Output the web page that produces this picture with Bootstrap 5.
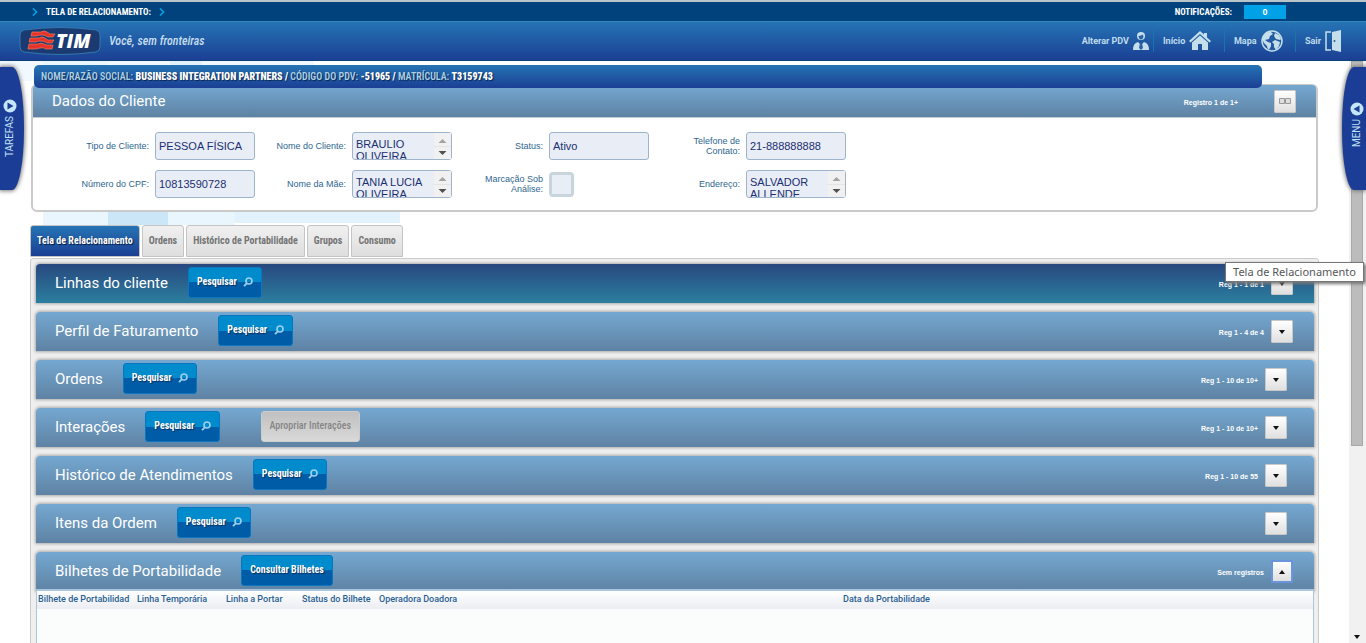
<!DOCTYPE html>
<html lang="pt-BR">
<head>
<meta charset="utf-8">
<meta name="viewport" content="width=device-width, initial-scale=1">
<title>Tela de Relacionamento</title>
<link rel="stylesheet" href="https://cdn.jsdelivr.net/npm/bootstrap@5.3.0/dist/css/bootstrap.min.css">
<style>
  :root { --narrow: "Roboto Condensed", "Liberation Sans Narrow", Roboto, sans-serif; }
  body { font-family: "Liberation Sans", Arial, sans-serif; font-size: 11px; line-height: 14px; color: #1c3d73; background: #fff; }
  a { text-decoration: none; }
  .crumb-bar { height: 22px; background: #02427c; border-top: 2px solid #b9c3ca; border-bottom: 1px solid #3784bd; color: #fff; font-weight: 700; font-size: 9px; font-family: var(--narrow); padding: 0 80px 0 32px; }
  .notif { width: 42px; height: 14px; background: #00a1e6; color: #fff; font: 700 9px/14px "Liberation Sans", Arial, sans-serif; }
  .brand-bar { height: 39px; background: linear-gradient(#2574b4, #1b3f94); border-bottom: 1px solid #0a4279; padding: 0 24px 1px 19px; }
  .slogan { font: italic 500 11px/14px var(--narrow); font-size: 12px; color: #c5def0; }
  .top-link { color: #bfdcec; font: 700 9px/14px Roboto, sans-serif; height: 22px; gap: 4px; padding-left: 9px; }
  .top-link.tile { width: 71px; }
  .top-link + .top-link { border-left: 1px solid #1478ac; }
  .workspace { background:
    linear-gradient(#eaf6fd, #eaf6fd) 43px 0 / 65px 164px no-repeat,
    linear-gradient(#cbe6f7, #cbe6f7) 108px 20px / 60px 144px no-repeat,
    linear-gradient(#eaf6fd, #eaf6fd) 168px 20px / 67px 144px no-repeat,
    linear-gradient(#e1f2fc, #e1f2fc) 235px 20px / 165px 142px no-repeat,
    linear-gradient(#e1f2fc, #e1f2fc) 170px 0 / 32px 20px no-repeat,
    linear-gradient(#f2f9fe, #f2f9fe) 0 0 / 314px 20px no-repeat; }
  .sheet { padding: 4px 30px 0 30px; min-width: 0; }
  .who-bar { height: 23px; margin: 0 57px -4px 4px; padding: 0 7px; border-radius: 5px; background: linear-gradient(#2574b4, #1b3f94); color: #a9d0e4; font: 600 10px/23px var(--narrow); text-shadow: 1px 1px 1px #0a2550; z-index: 2; }
  .who-bar b { color: #fff; }
  .client-box { margin: 0 1px; border: 2px solid #cacaca; border-top-width: 1px; border-radius: 6px; background: #fff; height: 128px; }
  .client-head { height: 33px; background: linear-gradient(#75a8d1, #5e82a3); border-bottom: 1px solid #c4ccd2; border-radius: 4px 4px 0 0; padding: 0 20px 0 19px; }
  .sec-title { font: 400 15px/20px Roboto, sans-serif; color: #fff; margin: 0; }
  .reg { font-size: 7px; font-weight: 700; color: #fff; line-height: 10px; padding-top: 3px; }
  .form-zone { display: grid; grid-template-columns: repeat(4, 197px); row-gap: 10px; padding: 14px 0 0 25px; }
  .form-zone label { width: 68px; text-align: right; font-size: 9px; line-height: 10px; color: #2f6690; }
  .cell { display: flex; align-items: center; justify-content: flex-end; gap: 6px; width: 197px; height: 28px; }
  .cell-box { position: relative; width: 100px; height: 28px; }
  .form-zone .form-control { width: 100px; height: 28px; min-height: 28px; padding: 0 3px; font-size: 11px; line-height: 13px; color: #1a2f72; background: #e9edf6; border: 1px solid #9db4cb; border-radius: 3px; }
  .form-zone textarea.form-control { padding: 5px 20px 0 3px; line-height: 12px; resize: none; overflow: hidden; }
  .spin { position: absolute; right: 1px; top: 1px; width: 17px; height: 26px; background: #f1f1f1; }
  .form-zone .form-check-input { width: 25px; height: 25px; margin: 0; border: 3px solid #c8d5dc; border-radius: 4px; background: #e9edf6; }
  .nav-tabs.main-tabs { border: 0; margin-top: 13px; gap: 2px; }
  .main-tabs .nav-link { height: 32px; margin: 0; padding: 0 6px; border: 1px solid #c4c4c4; border-radius: 3px 3px 0 0; background: linear-gradient(#f0f0f0, #dedede); color: #747474; font: 700 10px/30px var(--narrow); white-space: nowrap; }
  .main-tabs .nav-link.active { background: linear-gradient(#2574b4, #1b3f94); color: #fff; text-shadow: 1px 1px 1px #06183f; border-color: #c4c4c4; }
  .panels { margin-top: 1px; border: 1px solid #cbcbcb; border-radius: 3px 3px 0 0; background: #efefef; padding: 5px 4px 0 5px; gap: 9px; }
  .strip { height: 39px; flex-shrink: 0; border-radius: 4px 4px 0 0; background: linear-gradient(#75a8d1, #5e82a3); box-shadow: 0 0 3px 1px #aaa; padding: 0 27px 2px 19px; gap: 20px; }
  .strip.wide { padding-right: 21px; }
  .strip.current { background: linear-gradient(#28487f, #2b7f9f); }
  .strip .sec-title { padding-top: 1px; }
  .strip .tally { gap: 7px; padding-top: 2px; }
  .act { height: 31px; padding: 0 8px 2px; border: 1px solid #0a76c0; border-radius: 3px; color: #fff; background: linear-gradient(#008ccc 50%, #005ca6 50%); font: 700 10px/14px var(--narrow); text-shadow: 1px 1px 1px #05315e; white-space: nowrap; }
  .act.idle { background: linear-gradient(#c0c0c0, #d9d9d9); border-color: #ccc; color: #858585; text-shadow: none; margin-left: 21px; font-weight: 500; }
  .sq { width: 22px; height: 23px; padding: 0; border: 1px solid #c9c9c9; border-radius: 1px; background: linear-gradient(#fff, #dfdfdf); line-height: 0; }
  .sq.focused { border: 2px solid #6a94dc; }
  .grid-wrap { border: 1px solid #a9c6dd; border-top-width: 2px; background: #fbfdfd; margin-top: -11px; z-index: 1; }
  .grid-wrap table { table-layout: fixed; width: 100%; background: linear-gradient(#fff, #ebedf2); }
  .grid-wrap th { font: 500 9px/17px Roboto, sans-serif; color: #2a5f92; padding: 0 0 1px 1px; white-space: nowrap; }
  .side-tab { position: absolute; top: 6px; width: 24px; height: 123px; border: 0; padding: 0 4px 0 0; background: #1c3d96; color: #bfe0f5; box-shadow: 0 0 4px 1px #777; font: 400 10px/14px Roboto, sans-serif; z-index: 5; gap: 3px; }
  .side-tab span { writing-mode: vertical-rl; transform: rotate(180deg); }
  .side-left { left: 0; border-radius: 0 12px 12px 0 / 0 60px 60px 0; }
  .side-right { right: 0; padding: 0 0 8px 6px; border-radius: 12px 0 0 12px / 60px 0 0 60px; }
  .scroller { width: 17px; background: #f1f1f1; padding: 0 3px 0 2px; }
  .thumb { height: 385px; background: #bcbcbc; border: 1px solid #a8a8a8; }
  .hint { position: absolute; right: 2px; top: 201px; padding: 1px 7px 2px; border: 1px solid #767676; background: #fff; color: #575757; font: 400 11px/15px "Noto Sans", sans-serif; box-shadow: 2px 2px 3px #777; z-index: 6; white-space: nowrap; }
</style>
</head>
<body class="vh-100 d-flex flex-column overflow-hidden">
<svg width="0" height="0" class="position-absolute" aria-hidden="true">
  <symbol id="lens" viewBox="0 0 10 10"><circle cx="6" cy="4" r="3" fill="none" stroke="#9dd0ee" stroke-width="1.6"/><path d="M4 6.2 1 9.2" stroke="#9dd0ee" stroke-width="1.8"/></symbol>
  <symbol id="down" viewBox="0 0 8 4"><path d="M1 0h6L4 4z" fill="#111"/></symbol>
  <symbol id="updown" viewBox="0 0 17 26"><path d="M4.500 10h8L8.500 6z" fill="#a3a3a3"/><path d="M4.500 18h8l-4 4z" fill="#505050"/><path d="M0 13.500h17" stroke="#e4e4e4"/></symbol>
</svg>

<div class="crumb-bar d-flex align-items-center flex-shrink-0">
  <svg width="6" height="8" viewBox="0 0 6 8"><path d="M1 .5 4.500 4 1 7.500" fill="none" stroke="#00a1e6" stroke-width="1.600"/></svg>
  <span class="mx-2">TELA DE RELACIONAMENTO:</span>
  <svg width="6" height="8" viewBox="0 0 6 8"><path d="M1 .5 4.500 4 1 7.500" fill="none" stroke="#00a1e6" stroke-width="1.600"/></svg>
  <span class="ms-auto me-2 pe-1">NOTIFICAÇÕES:</span>
  <span class="notif text-center">0</span>
</div>

<header class="brand-bar d-flex align-items-center flex-shrink-0">
  <svg width="82" height="28" viewBox="0 0 82 28" role="img" aria-label="TIM">
    <path d="M5 3Q41-2 77 3Q81 4 81 8V20Q81 24 77 25Q41 30 5 25Q1 24 1 20V8Q1 4 5 3Z" fill="#1c3a72" stroke="#3279ac"/>
    <g fill="#e8332c" stroke="#f5885a" stroke-width=".6">
      <path d="M13 5h9q3-2 6 0l3 2h5l-2 3h-5q-3-2-6-2t-5 1h-6z"/>
      <path d="M11 11h9q3-2 6 0l3 2h6l-2 3h-5q-3-2-6-2t-5 1h-7z"/>
      <path d="M10 17h9q3-2 6 0l3 1h6l-1 4h-6q-3-2-6-1t-5 1H9z"/>
    </g>
    <text x="37" y="21" font-family="Open Sans, sans-serif" font-weight="800" font-style="italic" font-size="19" fill="#fff">TIM</text>
  </svg>
  <span class="slogan ms-2">Você, sem fronteiras</span>
  <nav class="ms-auto d-flex align-items-center">
    <a href="#" class="top-link d-flex align-items-center pe-1">Alterar PDV
      <svg width="16" height="20" viewBox="0 0 16 20" fill="#c5dfea"><circle cx="8" cy="5" r="4"/><path d="M0 19q0-7 5-8l3 3 3-3q5 1 5 8z"/><path d="M7 12h2l1 5-2 2-2-2z" fill="#2b62a5"/><path d="M5.500 5q3-.2 4-1.500.8 1 1 2-.5 3-2.500 3T5.500 5z" fill="#2b62a5"/></svg></a>
    <a href="#" class="top-link tile d-flex align-items-center">Início
      <svg width="22" height="20" viewBox="0 0 22 20" fill="#c5dfea"><path d="M11 0 0 10l1.500 1.500L11 3l9.500 8.500L22 10l-4-3.600V2h-3v1.600z"/><path d="M11 4.500 3 11.500V19h6v-6h4v6h6v-7.500z"/></svg></a>
    <a href="#" class="top-link tile d-flex align-items-center">Mapa
      <svg width="22" height="22" viewBox="0 0 22 22"><circle cx="11" cy="11" r="10" fill="#245aa3" stroke="#c5dfea" stroke-width="1.500"/><path d="M3 5q4-4 7-3l2 2-3 2-1 3-4 1 3 2 3 1v3l-2 4q-2-2-2-4l-3-3-2-4zM14 3l4 2 2 4-1 1-4-1-2-3zM14 10l5 2-1 4-3 4-2-3v-3l-2-2z" fill="#c5dfea"/></svg></a>
    <a href="#" class="top-link d-flex align-items-center">Sair
      <svg width="17" height="22" viewBox="0 0 17 22"><path d="M6 2H1v18h5" fill="none" stroke="#c5dfea" stroke-width="1.500"/><path d="M7 2 16 0v22L7 20z" fill="#c5dfea"/><circle cx="9.500" cy="11" r="1" fill="#245aa3"/></svg></a>
  </nav>
</header>

<div class="workspace d-flex flex-grow-1 position-relative overflow-hidden">
  <button class="side-tab side-left d-flex flex-column align-items-center justify-content-center" type="button">
    <svg width="14" height="14" viewBox="0 0 14 14"><circle cx="7" cy="7" r="6.500" fill="#c5e6fa"/><path d="M4.500 3.500v7l6-3.500z" fill="#1c3d96"/></svg><span>TAREFAS</span></button>

  <main class="sheet flex-grow-1">
    <div class="who-bar position-relative text-nowrap">NOME/RAZÃO SOCIAL: <b>BUSINESS INTEGRATION PARTNERS /</b> CÓDIGO DO PDV: <b>-51965 /</b> MATRÍCULA: <b>T3159743</b></div>

    <section class="client-box">
      <div class="client-head d-flex align-items-center">
        <h1 class="sec-title">Dados do Cliente</h1>
        <span class="reg ms-auto me-4 pe-2">Registro 1 de 1+</span>
        <button class="sq ms-1" type="button" aria-label="Detalhes"><svg width="12" height="8" viewBox="0 0 12 8"><path d="M.5 1.500h5v5h-5zM6.500 1.500h5v5h-5z" fill="#ddd" stroke="#999"/></svg></button>
      </div>
      <form class="form-zone">
        <div class="cell"><label for="tipo">Tipo de Cliente:</label><input class="form-control" id="tipo" value="PESSOA FÍSICA"></div>
        <div class="cell"><label for="nome" class="w-auto">Nome do Cliente:</label><div class="cell-box"><textarea class="form-control" id="nome">BRAULIO OLIVEIRA</textarea><svg class="spin"><use href="#updown"/></svg></div></div>
        <div class="cell"><label for="status">Status:</label><input class="form-control" id="status" value="Ativo"></div>
        <div class="cell"><label for="fone">Telefone de Contato:</label><input class="form-control" id="fone" value="21-888888888"></div>
        <div class="cell"><label for="cpf" class="w-auto">Número do CPF:</label><input class="form-control" id="cpf" value="10813590728"></div>
        <div class="cell"><label for="mae">Nome da Mãe:</label><div class="cell-box"><textarea class="form-control" id="mae">TANIA LUCIA OLIVEIRA</textarea><svg class="spin"><use href="#updown"/></svg></div></div>
        <div class="cell"><label for="marca">Marcação Sob Análise:</label><div class="cell-box d-flex align-items-center"><input class="form-check-input" type="checkbox" id="marca"></div></div>
        <div class="cell"><label for="ende">Endereço:</label><div class="cell-box"><textarea class="form-control" id="ende">SALVADOR ALLENDE</textarea><svg class="spin"><use href="#updown"/></svg></div></div>
      </form>
    </section>

    <ul class="nav nav-tabs main-tabs flex-nowrap">
      <li class="nav-item"><a class="nav-link active" href="#">Tela de Relacionamento</a></li>
      <li class="nav-item"><a class="nav-link" href="#">Ordens</a></li>
      <li class="nav-item"><a class="nav-link" href="#">Histórico de Portabilidade</a></li>
      <li class="nav-item"><a class="nav-link" href="#">Grupos</a></li>
      <li class="nav-item"><a class="nav-link" href="#">Consumo</a></li>
    </ul>

    <div class="panels d-flex flex-column h-100">
      <div class="strip wide current d-flex align-items-center"><h2 class="sec-title">Linhas do cliente</h2><button class="act" type="button">Pesquisar <svg class="ms-1" width="10" height="10"><use href="#lens"/></svg></button><div class="tally ms-auto d-flex align-items-center"><span class="reg">Reg 1 - 1 de 1</span><button class="sq" type="button" aria-label="Expandir"><svg width="8" height="4"><use href="#down"/></svg></button></div></div>
      <div class="strip wide d-flex align-items-center"><h2 class="sec-title">Perfil de Faturamento</h2><button class="act" type="button">Pesquisar <svg class="ms-1" width="10" height="10"><use href="#lens"/></svg></button><div class="tally ms-auto d-flex align-items-center"><span class="reg">Reg 1 - 4 de 4</span><button class="sq" type="button" aria-label="Expandir"><svg width="8" height="4"><use href="#down"/></svg></button></div></div>
      <div class="strip d-flex align-items-center"><h2 class="sec-title">Ordens</h2><button class="act" type="button">Pesquisar <svg class="ms-1" width="10" height="10"><use href="#lens"/></svg></button><div class="tally ms-auto d-flex align-items-center"><span class="reg">Reg 1 - 10 de 10+</span><button class="sq" type="button" aria-label="Expandir"><svg width="8" height="4"><use href="#down"/></svg></button></div></div>
      <div class="strip d-flex align-items-center"><h2 class="sec-title">Interações</h2><button class="act" type="button">Pesquisar <svg class="ms-1" width="10" height="10"><use href="#lens"/></svg></button><button class="act idle" type="button">Apropriar Interações</button><div class="tally ms-auto d-flex align-items-center"><span class="reg">Reg 1 - 10 de 10+</span><button class="sq" type="button" aria-label="Expandir"><svg width="8" height="4"><use href="#down"/></svg></button></div></div>
      <div class="strip d-flex align-items-center"><h2 class="sec-title">Histórico de Atendimentos</h2><button class="act" type="button">Pesquisar <svg class="ms-1" width="10" height="10"><use href="#lens"/></svg></button><div class="tally ms-auto d-flex align-items-center"><span class="reg">Reg 1 - 10 de 55</span><button class="sq" type="button" aria-label="Expandir"><svg width="8" height="4"><use href="#down"/></svg></button></div></div>
      <div class="strip d-flex align-items-center"><h2 class="sec-title">Itens da Ordem</h2><button class="act" type="button">Pesquisar <svg class="ms-1" width="10" height="10"><use href="#lens"/></svg></button><div class="tally ms-auto d-flex align-items-center"><button class="sq" type="button" aria-label="Expandir"><svg width="8" height="4"><use href="#down"/></svg></button></div></div>
      <div class="strip wide d-flex align-items-center"><h2 class="sec-title">Bilhetes de Portabilidade</h2><button class="act" type="button">Consultar Bilhetes</button><div class="tally ms-auto d-flex align-items-center"><span class="reg">Sem registros</span><button class="sq focused" type="button" aria-label="Recolher"><svg width="8" height="4" viewBox="0 0 8 4"><path d="M1 4h6L4 0z" fill="#111"/></svg></button></div></div>
      <div class="grid-wrap flex-grow-1">
        <table>
          <colgroup><col style="width:99px"><col style="width:89px"><col style="width:76px"><col style="width:77px"><col style="width:81px"><col></colgroup>
          <thead><tr><th>Bilhete de Portabilidad</th><th>Linha Temporária</th><th>Linha a Portar</th><th>Status do Bilhete</th><th>Operadora Doadora</th><th class="text-center">Data da Portabilidade</th></tr></thead>
        </table>
      </div>
    </div>
  </main>

  <div class="scroller d-flex flex-column flex-shrink-0 justify-content-between pb-1" aria-hidden="true">
    <div class="thumb"></div>
    <svg class="mx-auto" width="8" height="4"><use href="#down"/></svg>
  </div>

  <button class="side-tab side-right d-flex flex-column align-items-center justify-content-center" type="button">
    <svg width="14" height="14" viewBox="0 0 14 14"><circle cx="7" cy="7" r="6.500" fill="#c5e6fa"/><path d="M9.500 3.500v7l-6-3.500z" fill="#1c3d96"/></svg><span>MENU</span></button>
  <div class="hint" role="tooltip">Tela de Relacionamento</div>
</div>
<script src="https://cdn.jsdelivr.net/npm/bootstrap@5.3.0/dist/js/bootstrap.bundle.min.js"></script>
</body>
</html>
